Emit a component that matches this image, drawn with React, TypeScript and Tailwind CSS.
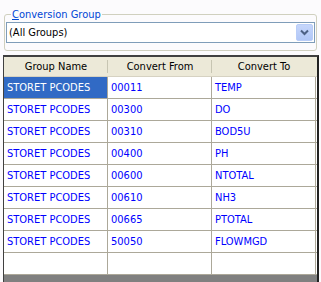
import React from 'react';

const rows = [
  ['STORET PCODES', '00011', 'TEMP'],
  ['STORET PCODES', '00300', 'DO'],
  ['STORET PCODES', '00310', 'BOD5U'],
  ['STORET PCODES', '00400', 'PH'],
  ['STORET PCODES', '00600', 'NTOTAL'],
  ['STORET PCODES', '00610', 'NH3'],
  ['STORET PCODES', '00665', 'PTOTAL'],
  ['STORET PCODES', '50050', 'FLOWMGD'],
];

const cols = ['Group Name', 'Convert From', 'Convert To'];

export default function App() {
  return (
    <div className="w-[321px] h-[282px] overflow-hidden bg-[#fcfbfd] text-[11px] leading-[13px] text-black [font-family:'DejaVu_Sans_Condensed','DejaVu_Sans',sans-serif]">
      {/* Conversion group box */}
      <fieldset className="mx-[4px] mt-[8px] h-[43px] rounded-[3px] border border-[#d0d0bf] px-[1px] pb-0">
        <legend className="ml-[5px] px-[1px] text-[#0046d5]">
          <span className="underline">C</span>onversion Group
        </legend>
        <div className="mt-[1px] flex h-[21px] items-center border border-[#7f9db9] bg-white pl-[2px] pr-[1px]">
          <span className="flex-1">(All Groups)</span>
          <div className="flex h-[17px] w-[17px] items-center justify-center rounded-[2px] border border-[#b9cdf8] bg-gradient-to-b from-[#c6d6fb] to-[#b1c7f7]">
            <svg width="9" height="7" viewBox="0 0 9 7">
              <path d="M1 1.5 L4.5 5 L8 1.5" fill="none" stroke="#4d6185" strokeWidth="2" />
            </svg>
          </div>
        </div>
      </fieldset>

      {/* Grid */}
      <div className="ml-[3px] mt-[4px] h-[229px] w-[316px] border-l border-r-2 border-t-2 border-l-[#404040] border-r-[#222] border-t-[#404040] bg-[#808080]">
        <div className="flex h-[20px] bg-[#ece9d8] border-b border-[#d6d2c2]">
          {cols.map((c, i) => (
            <div key={c} className="relative flex w-[104px] items-center justify-center">
              {c}
              {i < 2 && <span className="absolute right-0 top-[3px] h-[13px] w-[1px] bg-[#c7c5b2]" />}
            </div>
          ))}
        </div>
        {[...rows, ['', '', '']].map((r, ri) => (
          <div key={ri} className="flex h-[22px] w-[313px] border-b border-[#aca899] bg-white">
            {r.map((cell, ci) => (
              <div
                key={ci}
                className={`flex w-[104px] items-center border-r border-[#aca899] pl-[3px] ${
                  ri === 0 && ci === 0 ? 'bg-[#316ac5] text-white' : 'text-[#0000ff]'
                }`}
              >
                {cell}
              </div>
            ))}
          </div>
        ))}
      </div>
    </div>
  );
}
